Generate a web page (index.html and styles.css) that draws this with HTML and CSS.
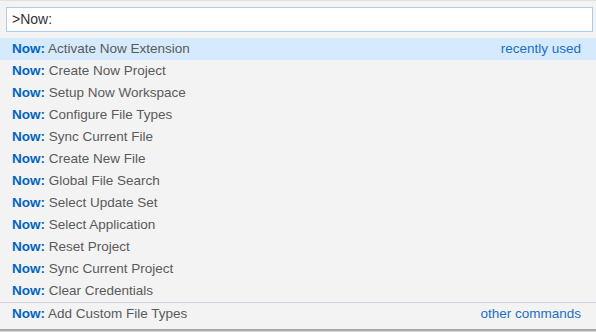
FILE: index.html
```html
<!DOCTYPE html>
<html>
<head>
<meta charset="utf-8">
<link rel="stylesheet" href="styles.css">
</head>
<body>
<div class="palette">
  <div class="input-wrap">
    <div class="input">&gt;Now:</div>
  </div>
  <div class="list">
    <div class="row selected"><span class="label"><b>Now:</b> Activate Now Extension</span><span class="tag">recently used</span></div>
    <div class="row"><span class="label"><b>Now:</b> Create Now Project</span></div>
    <div class="row"><span class="label"><b>Now:</b> Setup Now Workspace</span></div>
    <div class="row"><span class="label"><b>Now:</b> Configure File Types</span></div>
    <div class="row"><span class="label"><b>Now:</b> Sync Current File</span></div>
    <div class="row"><span class="label"><b>Now:</b> Create New File</span></div>
    <div class="row"><span class="label"><b>Now:</b> Global File Search</span></div>
    <div class="row"><span class="label"><b>Now:</b> Select Update Set</span></div>
    <div class="row"><span class="label"><b>Now:</b> Select Application</span></div>
    <div class="row"><span class="label"><b>Now:</b> Reset Project</span></div>
    <div class="row"><span class="label"><b>Now:</b> Sync Current Project</span></div>
    <div class="row"><span class="label"><b>Now:</b> Clear Credentials</span></div>
    <div class="row separated"><span class="label"><b>Now:</b> Add Custom File Types</span><span class="tag">other commands</span></div>
  </div>
</div>
</body>
</html>
```
FILE: styles.css
```css
html, body {
  margin: 0;
  padding: 0;
  background: #d6d6d6;
}
body {
  width: 596px;
  height: 332px;
  overflow: hidden;
  font-family: "Liberation Sans", Arial, sans-serif;
  font-size: 13.5px;
}
.palette {
  background: #f3f3f3;
  border-top: 1px solid #e2e2e2;
  border-bottom: 2px solid #a9a9a9;
  height: 328px;
  box-sizing: content-box;
}
.input-wrap {
  padding: 6px 3px 6px 6px;
}
.input {
  height: 23px;
  line-height: 23px;
  border: 1px solid #a8cdee;
  background: #fff;
  padding: 0 5px;
  color: #333;
  font-size: 14px;
}
.list {
  display: flex;
  flex-direction: column;
}
.row {
  height: 22px;
  line-height: 22px;
  display: flex;
  justify-content: space-between;
  padding: 0 15px 0 12px;
  color: #5a5a5a;
}
.row b {
  color: #0063c1;
  font-weight: bold;
}
.row.selected {
  background: #d6eafd;
}
.row.separated {
  border-top: 1px solid #d2d2de;
}
.tag {
  color: #1a6fc4;
}
```
